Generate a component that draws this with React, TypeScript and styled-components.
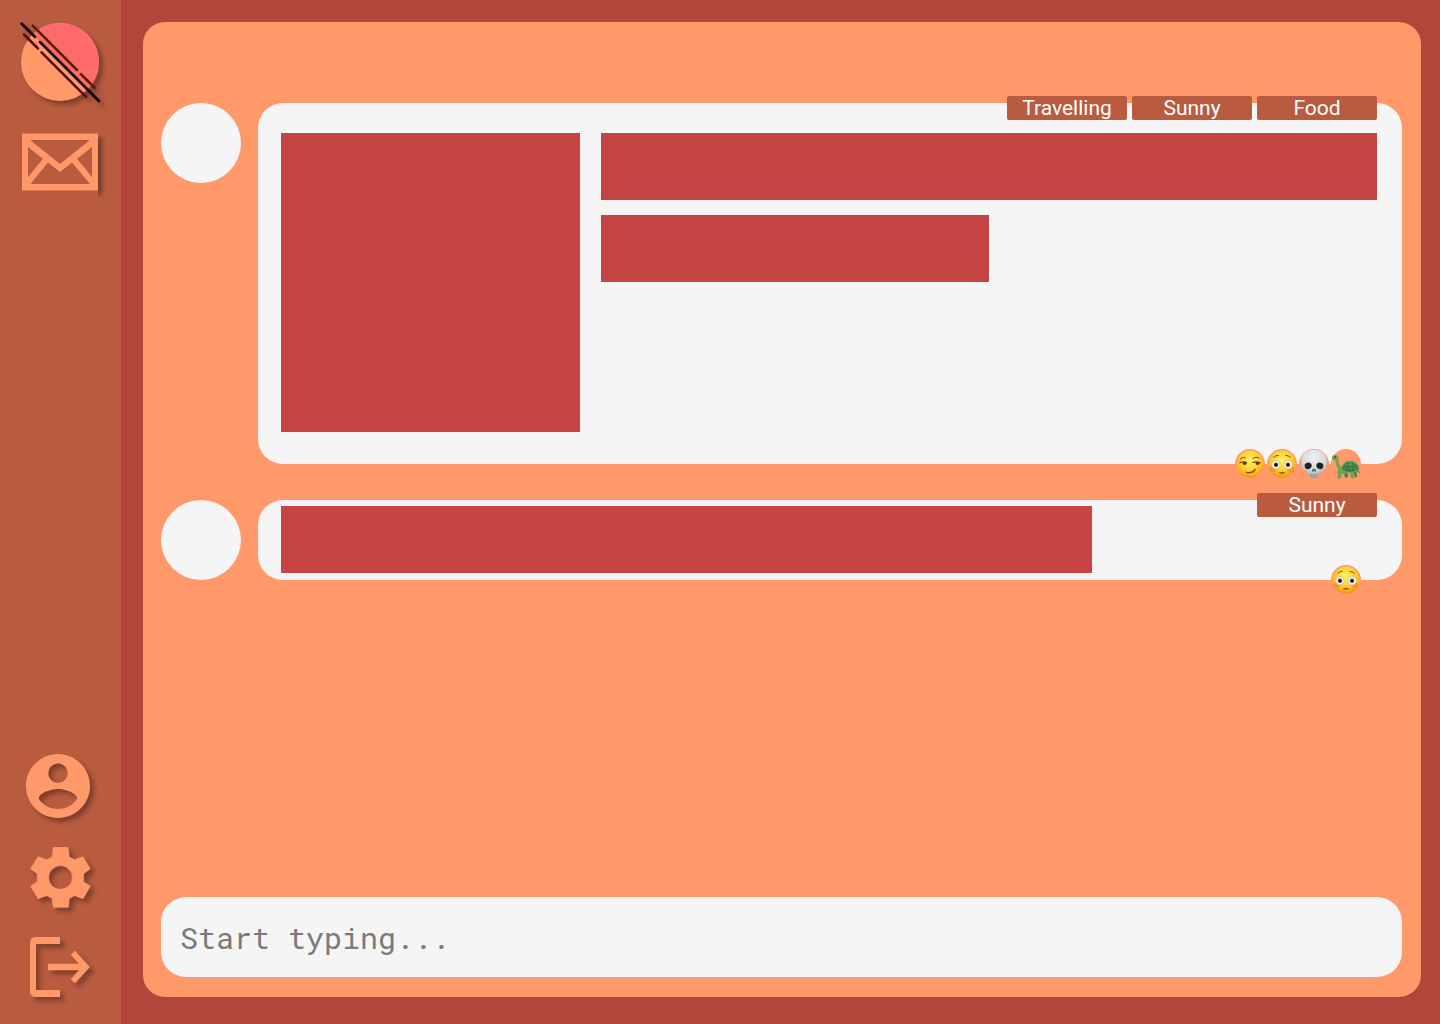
import React, { useState } from "react";
import styled, { createGlobalStyle } from "styled-components";

const color = {
  page: "#b2463b",
  rail: "#b85b3f",
  peach: "#ff996a",
  coral: "#ff6b6b",
  surface: "#f5f5f5",
  block: "#c64444",
  muted: "#7a7a7a",
};

const GlobalStyle = createGlobalStyle`
  *, *::before, *::after { box-sizing: border-box; }
  body { margin: 0; background: ${color.page}; font-family: Roboto, "Liberation Sans", sans-serif; }
  button { font: inherit; cursor: pointer; }
`;

const Page = styled.div`
  display: flex;
  min-height: 100vh;
`;

const Rail = styled.nav`
  display: flex;
  flex-direction: column;
  justify-content: space-between;
  flex: 0 0 121px;
  padding: 21px 0 27px;
  background: ${color.rail};
`;

const RailGroup = styled.div<{ $gap: number }>`
  display: flex;
  flex-direction: column;
  align-items: center;
  gap: ${(p) => p.$gap}px;
`;

const RailLink = styled.a`
  display: flex;
  color: ${color.peach};
`;

const Glyph = styled.svg<{ $shadow?: boolean }>`
  display: block;
  overflow: visible;
  filter: ${(p) => (p.$shadow ? "drop-shadow(4px 4px 2px rgba(0, 0, 0, 0.3))" : "none")};
`;

const RailButton = styled.button`
  display: flex;
  padding: 0;
  border: 0;
  background: none;
  color: ${color.peach};
`;

const Main = styled.main`
  display: flex;
  flex: 1;
  min-width: 0;
  padding: 22px 19px 27px 22px;
`;

const Panel = styled.section`
  display: flex;
  flex-direction: column;
  justify-content: space-between;
  gap: 36px;
  flex: 1;
  min-width: 0;
  padding: 81px 19px 20px 18px;
  border-radius: 22px;
  background: ${color.peach};
`;

const Feed = styled.div`
  display: flex;
  flex-direction: column;
  gap: 36px;
`;

const Post = styled.article`
  display: flex;
  align-items: flex-start;
  gap: 17px;
`;

const Avatar = styled.div`
  flex: 0 0 80px;
  height: 80px;
  border-radius: 50%;
  background: ${color.surface};
`;

const Card = styled.div<{ $compact?: boolean }>`
  position: relative;
  display: flex;
  flex: 1;
  min-width: 0;
  gap: 21px;
  padding: ${(p) => (p.$compact ? "6px 25px 7px 23px" : "30px 25px 32px 23px")};
  border-radius: 25px;
  background: ${color.surface};
`;

const Media = styled.div`
  flex: 0 0 299px;
  height: 299px;
  background: ${color.block};
`;

const Lines = styled.div`
  display: flex;
  flex-direction: column;
  gap: 15px;
  flex: 1;
  min-width: 0;
`;

const Line = styled.div<{ $width: string }>`
  width: ${(p) => p.$width};
  height: 67px;
  background: ${color.block};
`;

const Tags = styled.div`
  position: absolute;
  top: -7px;
  right: 25px;
  display: flex;
  gap: 5px;
`;

const Tag = styled.span`
  width: 120px;
  border-radius: 2px;
  background: ${color.rail};
  color: #fff;
  font-size: 21px;
  line-height: 24px;
  text-align: center;
`;

const Reactions = styled.div`
  position: absolute;
  right: 41px;
  bottom: -15px;
  display: flex;
  gap: 2px;
`;

const Reaction = styled.button`
  display: flex;
  align-items: center;
  justify-content: center;
  width: 30px;
  height: 30px;
  padding: 0;
  border: 0;
  border-radius: 50%;
  background: ${color.peach};
`;

const Composer = styled.input`
  width: 100%;
  height: 80px;
  padding: 0 19px;
  border: 0;
  border-radius: 25px;
  background: ${color.surface};
  color: #333;
  font-family: "Roboto Mono", "Liberation Mono", monospace;
  font-size: 30px;
  outline: none;
  &::placeholder { color: ${color.muted}; opacity: 1; }
`;

const Logo = () => (
  <Glyph $shadow width="81" height="83" viewBox="20 21 81 83" aria-hidden="true">
    <circle cx="60" cy="62" r="39" fill={color.peach} />
    <path d="M32.4 34.4A39 39 0 0 1 87.6 89.6Z" fill={color.coral} />
    <g fill="none" strokeWidth="2.5" strokeLinecap="round">
      <path d="M32.7 25.7 77 70M80.7 74 95 88" stroke="#5c1c00" />
      <path d="M24 34.5 38 48.5M41.5 52.3 86 96.8" stroke="#5a0808" />
      <path d="M21.5 23.5 35 37M40 42 99 101" stroke="#000" />
    </g>
  </Glyph>
);

const MailIcon = () => (
  <Glyph width="77" height="58" viewBox="22 133 77 58" aria-hidden="true">
    <defs>
      <filter id="mailBlur" x="-20%" y="-20%" width="140%" height="140%">
        <feGaussianBlur stdDeviation="2" />
      </filter>
      <clipPath id="mailEdge"><rect x="98" y="133" width="12" height="68" /></clipPath>
    </defs>
    <g clipPath="url(#mailEdge)">
      <rect x="26" y="137.5" width="76" height="57" fill="#000" opacity="0.35" filter="url(#mailBlur)" />
    </g>
    <path
      fill="currentColor"
      fillRule="evenodd"
      d="M22 133.4H98V190.6H22ZM30 140 60 164 90 140ZM28 147V177L43 158.7ZM92 147 77 158.7 92 177ZM30.5 184H90L72 162.5 60 172 48 162.5Z"
    />
  </Glyph>
);

const ProfileIcon = () => (
  <Glyph $shadow width="69" height="64" viewBox="2 2 21.5625 20" aria-hidden="true">
    <path
      fill="currentColor"
      d="M12 2C6.48 2 2 6.48 2 12s4.48 10 10 10 10-4.48 10-10S17.52 2 12 2zm0 3c1.66 0 3 1.34 3 3s-1.34 3-3 3-3-1.34-3-3 1.34-3 3-3zm0 14.2c-2.5 0-4.71-1.28-6-3.22.03-1.99 4-3.08 6-3.08 1.99 0 5.97 1.09 6 3.08-1.29 1.94-3.5 3.22-6 3.22z"
    />
  </Glyph>
);

const GearIcon = () => (
  <Glyph $shadow width="61" height="61" viewBox="90 42 183 183" aria-hidden="true">
    <path
      fill="currentColor"
      fillRule="evenodd"
      stroke="currentColor"
      strokeWidth="2"
      strokeLinejoin="round"
      d="M160 43H204L208 72 224 80 249 71 271 107 251 122V146L271 160 249 197 224 188 208 196 205 223H160L156 196 140 188 114 197 92 160 112 146V122L92 107 114 71 140 80 156 72ZM181.5 98A35.5 35.5 0 1 0 181.5 169A35.5 35.5 0 1 0 181.5 98Z"
    />
  </Glyph>
);

const LogoutIcon = () => (
  <Glyph $shadow width="61" height="60" viewBox="90 51 183 180" aria-hidden="true">
    <g fill="currentColor">
      <path d="M180 51V72H108V210H180V231H108Q90 231 90 213V69Q90 51 108 51Z" />
      <path d="M144 131H236L212 104 225 92 270 141 225 190 212 178 236 151H144Z" />
    </g>
  </Glyph>
);

const FaceBase = () => (
  <>
    <defs>
      <radialGradient id="skin" cx="50%" cy="36%" r="66%">
        <stop offset="0" stopColor="#fff06a" />
        <stop offset="0.5" stopColor="#ffd435" />
        <stop offset="0.82" stopColor="#fbad1e" />
        <stop offset="1" stopColor="#ec8713" />
      </radialGradient>
    </defs>
    <circle cx="14" cy="14" r="13.6" fill="url(#skin)" />
  </>
);

const Smirk = () => (
  <svg width="28" height="28" viewBox="0 0 28 28" aria-hidden="true">
    <FaceBase />
    <g fill="none" stroke="#7a480a" strokeLinecap="round">
      <path d="M4 9.2Q6.2 6.6 9.4 7.6M16.8 8.4Q20.2 5.8 23.2 8" strokeWidth="1" />
      <path d="M3.8 12.8Q7 11 10.6 12.6M17 12.6Q20.4 11 24 12.8" strokeWidth="1.1" />
      <path d="M10.4 22.4Q16.8 23.4 19.2 19.4" strokeWidth="1.4" />
    </g>
    <ellipse cx="8.6" cy="13.5" rx="1.9" ry="1.4" fill="#56320a" />
    <ellipse cx="21.6" cy="13.5" rx="1.9" ry="1.4" fill="#56320a" />
  </svg>
);

const Flushed = () => (
  <svg width="28" height="28" viewBox="0 0 28 28" aria-hidden="true">
    <FaceBase />
    <ellipse cx="5" cy="19.4" rx="3.6" ry="2.8" fill="#f56b25" opacity="0.4" />
    <ellipse cx="23" cy="19.4" rx="3.6" ry="2.8" fill="#f56b25" opacity="0.4" />
    <path d="M5.6 7.2Q7.6 5.2 10.4 5.4M17.6 5.4Q20.4 5.2 22.4 7.2" fill="none" stroke="#87500c" strokeWidth="1" strokeLinecap="round" />
    <g fill="#f4f7fa" stroke="#b9a684" strokeWidth="0.6">
      <circle cx="7.8" cy="14.8" r="4.2" />
      <circle cx="20.2" cy="14.8" r="4.2" />
    </g>
    <g fill="#6b4a32">
      <circle cx="8" cy="14.8" r="2.2" />
      <circle cx="20" cy="14.8" r="2.2" />
    </g>
    <g fill="#111">
      <circle cx="8" cy="14.8" r="1.4" />
      <circle cx="20" cy="14.8" r="1.4" />
    </g>
    <path d="M11.8 22.8H16.2" stroke="#74420a" strokeWidth="1.3" strokeLinecap="round" />
  </svg>
);

const Skull = () => (
  <svg width="28" height="30" viewBox="0 0 28 30" aria-hidden="true">
    <defs>
      <radialGradient id="bone" cx="50%" cy="25%" r="75%">
        <stop offset="0" stopColor="#efeff2" />
        <stop offset="0.6" stopColor="#d9dade" />
        <stop offset="1" stopColor="#9fa0a8" />
      </radialGradient>
    </defs>
    <path d="M14 .8C6 .8 1 6.2 1 12.4c0 2.5.9 4 1 5.6.2 1.800 1.600 2.600 3.600 3.400 1.600.6 2.200 1.600 2.500 3.200.5 2.900 2.300 4.600 5.900 4.600s5.400-1.700 5.900-4.600c.3-1.600.9-2.600 2.500-3.200 2-.8 3.400-1.600 3.600-3.400.1-1.600 1-3.100 1-5.600C27 6.200 22 .8 14 .8Z" fill="url(#bone)" />
    <path d="M4.800 15.200Q7 12.800 9.800 13.800 12.200 15 11.600 17.800 10.500 20.400 7.500 20.200 3.900 19.400 4.800 15.200ZM23.200 15.200Q21 12.800 18.200 13.800 15.800 15 16.400 17.800 17.500 20.400 20.500 20.200 24.100 19.400 23.200 15.200Z" fill="#202027" />
    <path d="M13.600 19.300Q11.600 21 12.200 22.200 13 23 13.600 22.200ZM14.400 19.300Q16.400 21 15.800 22.200 15 23 14.400 22.200Z" fill="#33333a" />
    <path d="M9.800 24.800Q14 26.400 18.200 24.800M11.400 25.500V27.800M13.200 26V28.400M14.800 26V28.400M16.600 25.500V27.800" fill="none" stroke="#85868f" strokeWidth="0.6" />
  </svg>
);

const Turtle = () => (
  <svg width="30" height="30" viewBox="0 0 30 30" aria-hidden="true">
    <defs>
      <linearGradient id="shell" x1="0" y1="0" x2="0" y2="1">
        <stop offset="0" stopColor="#6cab62" />
        <stop offset="1" stopColor="#34744a" />
      </linearGradient>
    </defs>
    <path d="M12.500 22 14 28.400H17L16.500 22ZM22 21.500 23.800 28H26.200L25 21ZM26.500 20.500 29.300 24 26 23Z" fill="#47803f" />
    <path d="M1.200 9.400C.6 7.400 2 5.600 4.400 5.700 6.800 5.900 7.800 7.400 7.400 9.400 7 12 7.600 14.500 9.400 16.800 10.400 18.200 11.600 19.600 13 21L20 23.500 13.500 24.800 10.600 25.200 9.900 29.500H6.200L7 25C5.800 23.600 6.400 21.600 7.400 20.400 5.200 18 4.800 14.500 4.300 10.900Z" fill="#6fa64c" />
    <path d="M18.800 23.200 19.800 29.200H23.400L23 22.400Z" fill="#6fa64c" />
    <path d="M10.700 21.300C9.800 16.600 13.600 11.500 19 11.500S28.200 16.200 28.200 20.500C24 24.600 15 25.200 10.700 21.300Z" fill="url(#shell)" />
    <path d="M12.600 17.200 16 14 21.500 13.800 25.800 16.600M16 14 17.500 17.600 15.300 22.500M21.500 13.800 22.500 17.200 21.200 22.800M17.500 17.600 22.500 17.200 27.300 18.600M12 18 17.500 17.600" fill="none" stroke="#255f3a" strokeWidth="0.6" />
    <path d="M11 21.600Q19 25.800 28 20.900" fill="none" stroke="#8fae62" strokeWidth="0.900" />
    <circle cx="4.200" cy="8" r="0.800" fill="#162312" />
    <path d="M1.500 9.600 4 10" stroke="#315f2a" strokeWidth="0.500" />
  </svg>
);

const emoji = { Smirk, Flushed, Skull, Turtle };
type EmojiName = keyof typeof emoji;

const ReactionBar = ({ names }: { names: EmojiName[] }) => (
  <Reactions>
    {names.map((name) => {
      const Icon = emoji[name];
      return (
        <Reaction key={name} type="button" aria-label={name}>
          <Icon />
        </Reaction>
      );
    })}
  </Reactions>
);

const TagList = ({ names }: { names: string[] }) => (
  <Tags>
    {names.map((name) => (
      <Tag key={name}>{name}</Tag>
    ))}
  </Tags>
);

export default function App() {
  const [draft, setDraft] = useState("");
  return (
    <>
      <GlobalStyle />
      <Page>
        <Rail aria-label="Main">
          <RailGroup $gap={29}>
            <RailLink href="#home" aria-label="Home"><Logo /></RailLink>
            <RailLink href="#messages" aria-label="Messages"><MailIcon /></RailLink>
          </RailGroup>
          <RailGroup $gap={29}>
            <RailLink href="#profile" aria-label="Profile"><ProfileIcon /></RailLink>
            <RailLink href="#settings" aria-label="Settings"><GearIcon /></RailLink>
            <RailButton type="button" aria-label="Log out"><LogoutIcon /></RailButton>
          </RailGroup>
        </Rail>
        <Main>
          <Panel>
            <Feed>
              <Post>
                <Avatar />
                <Card>
                  <Media />
                  <Lines>
                    <Line $width="100%" />
                    <Line $width="50%" />
                  </Lines>
                  <TagList names={["Travelling", "Sunny", "Food"]} />
                  <ReactionBar names={["Smirk", "Flushed", "Skull", "Turtle"]} />
                </Card>
              </Post>
              <Post>
                <Avatar />
                <Card $compact>
                  <Line $width="74%" />
                  <TagList names={["Sunny"]} />
                  <ReactionBar names={["Flushed"]} />
                </Card>
              </Post>
            </Feed>
            <Composer
              type="text"
              aria-label="Message"
              placeholder="Start typing..."
              value={draft}
              onChange={(e) => setDraft(e.target.value)}
            />
          </Panel>
        </Main>
      </Page>
    </>
  );
}
